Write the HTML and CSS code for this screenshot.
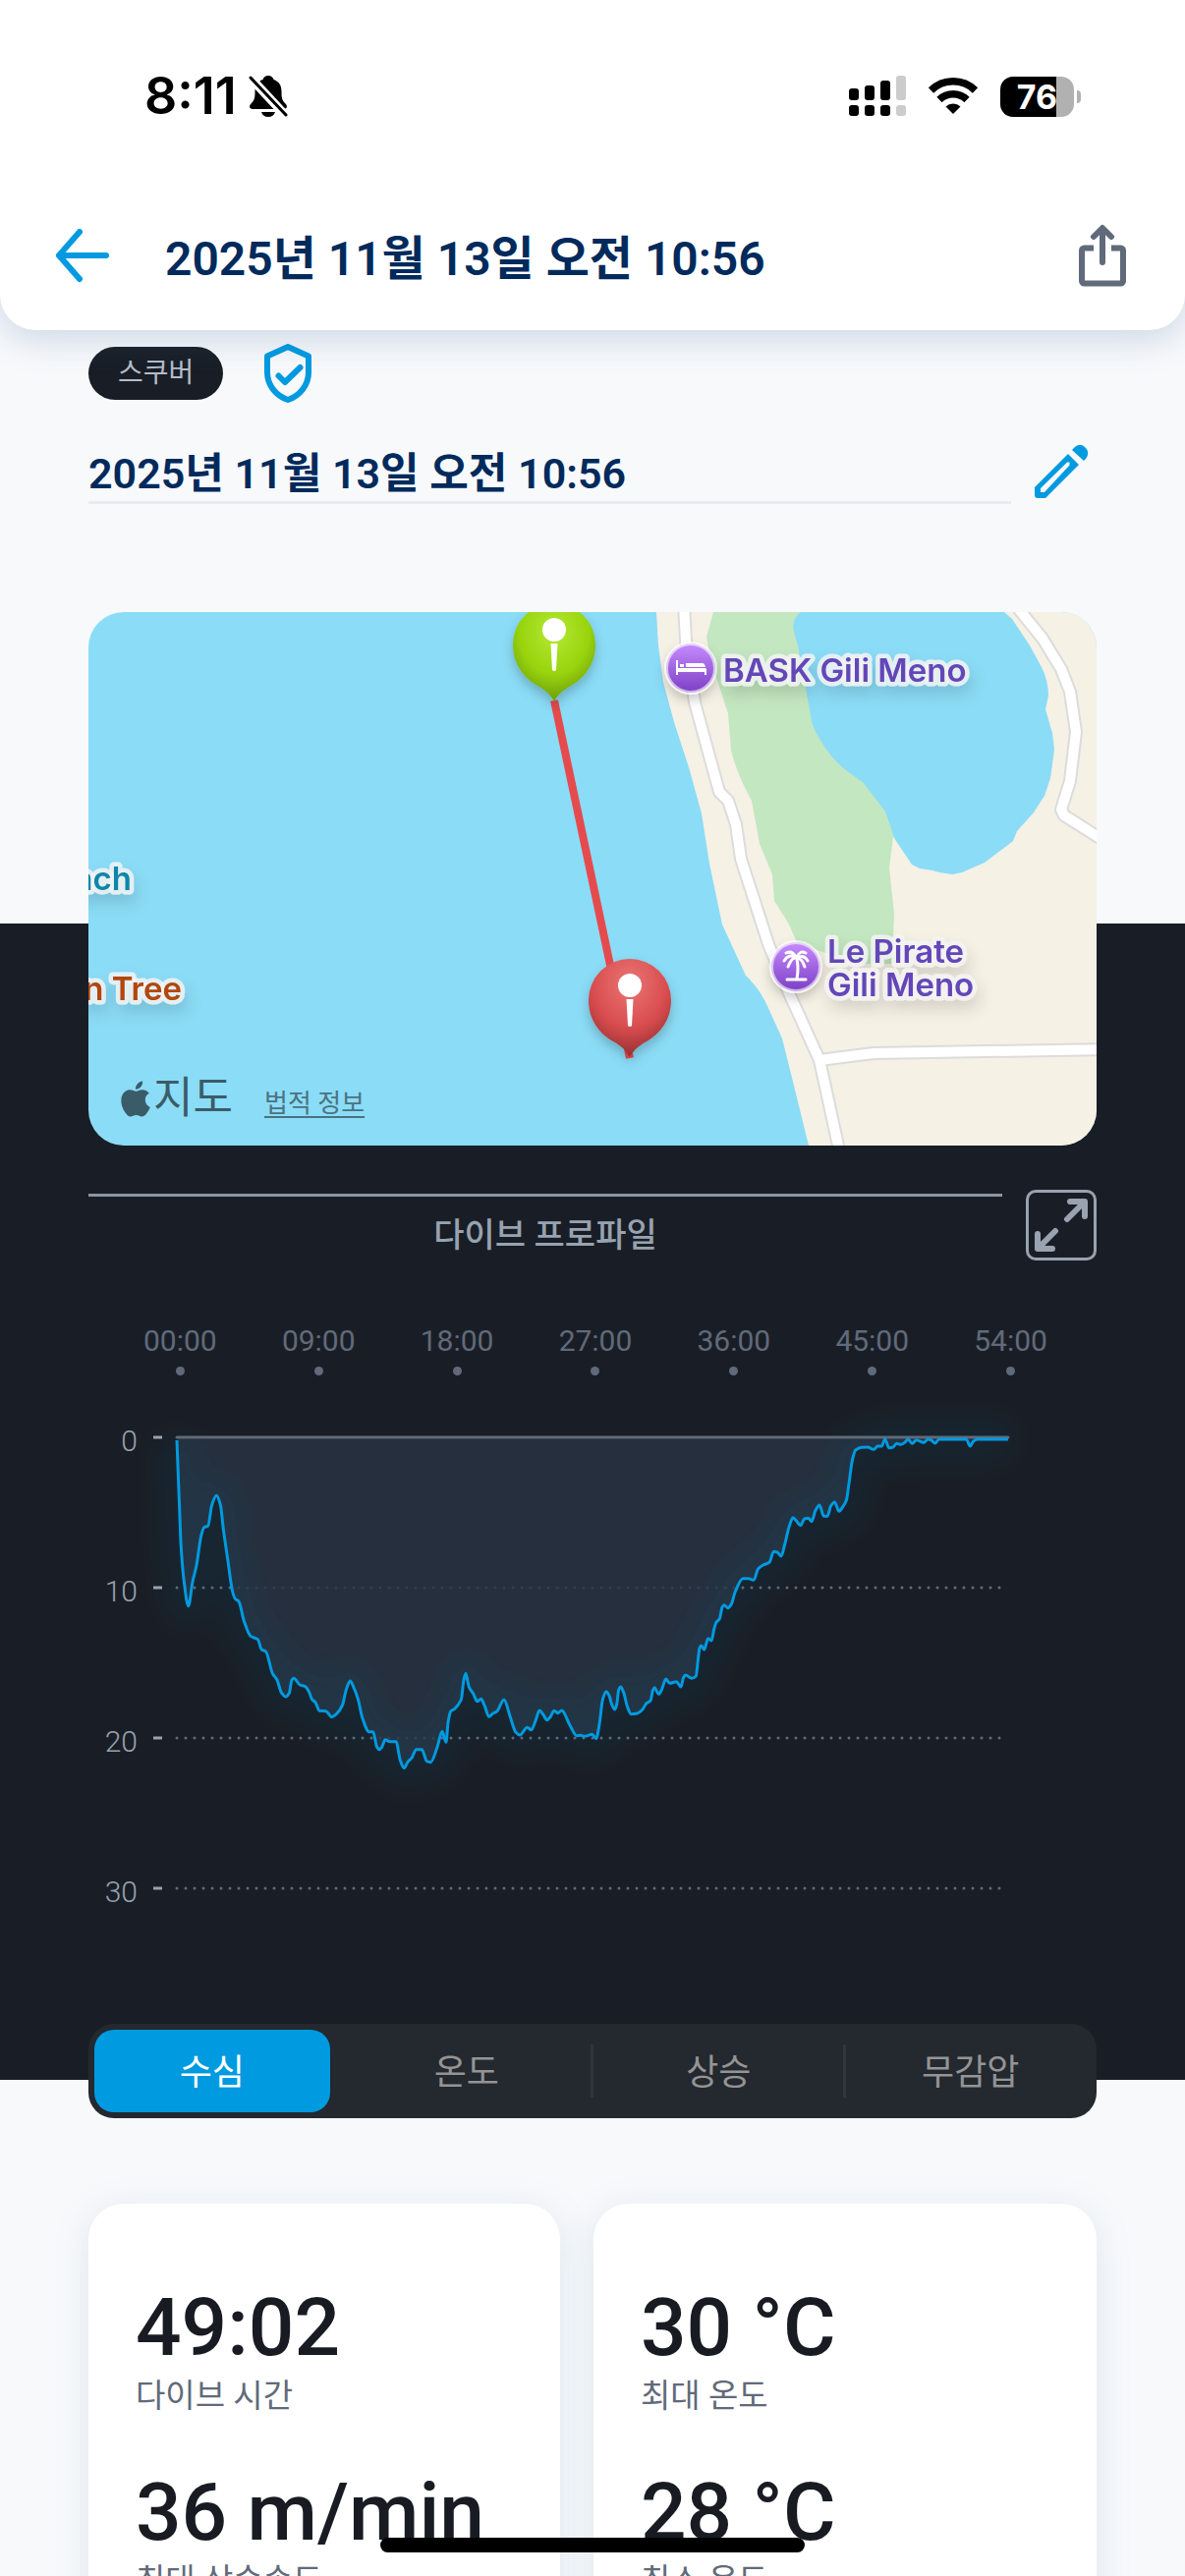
FILE: index.html
```html
<!DOCTYPE html>
<html lang="ko">
<head>
    <meta charset="UTF-8">
    <meta name="viewport" content="width=device-width, initial-scale=1.0">
    <title>다이브 로그</title>
    <link rel="stylesheet" href="styles.css">
</head>
<body>
    <header class="header">
        <div class="status-bar">
            <div class="status-left">
                <span class="clock">8:11</span>
                <svg class="bell" width="40" height="44" viewBox="0 0 40 44">
                    <path d="M20 1c-3 0-5 2-5.500 4C9 7 6.500 11 6.500 17c0 7-.5 9-4 12.500C0 32 1 35 4 35h32c3 0 4-3 1.500-5.500C34 26 33.500 24 33.500 17c0-6-2.500-10-8-12C25 3 23 1 20 1zM13 38h14c-1 3.500-3.500 5-7 5s-6-1.500-7-5z"/>
                    <path d="M-1 0l40 43" stroke="#fff" stroke-width="9"/>
                    <path d="M2 3l36 38" stroke="#000" stroke-width="3" stroke-linecap="round"/>
                </svg>
            </div>
            <div class="status-right">
                <svg width="58" height="42" viewBox="0 0 58 42">
                    <rect x="0" y="13" width="10" height="12" rx="3"/>
                    <rect x="16" y="10" width="10" height="15" rx="3"/>
                    <rect x="32" y="5" width="10" height="20" rx="3"/>
                    <rect x="48" y="0" width="10" height="25" rx="3" fill="#ccc"/>
                    <rect x="0" y="30" width="10" height="11" rx="3"/>
                    <rect x="16" y="30" width="10" height="11" rx="3"/>
                    <rect x="32" y="30" width="10" height="11" rx="3"/>
                    <rect x="48" y="30" width="10" height="11" rx="3" fill="#ccc"/>
                </svg>
                <svg width="52" height="38" viewBox="0 0 52 38">
                    <path d="M3.500 13a32 32 0 0 1 45 0" fill="none" stroke="#000" stroke-width="7.500"/>
                    <path d="M12 22.500a20 20 0 0 1 28 0" fill="none" stroke="#000" stroke-width="7.500"/>
                    <path d="M18.500 29.500a11 11 0 0 1 15 0L26 37z"/>
                </svg>
                <div class="battery"><span>76</span></div>
            </div>
        </div>
        <nav class="nav">
            <button class="icon-btn" aria-label="뒤로">
                <svg width="56" height="56" viewBox="0 0 56 56" fill="none" stroke="#009ae0" stroke-width="6" stroke-linecap="round" stroke-linejoin="round">
                    <path d="M25 4L4 28l21 24M4 28h48"/>
                </svg>
            </button>
            <h1>2025년 11월 13일 오전 10:56</h1>
            <button class="icon-btn" aria-label="공유">
                <svg width="48" height="64" viewBox="0 0 48 64" fill="none" stroke="#616a7a" stroke-width="6">
                    <path d="M15 24.500H5.500a2.500 2.500 0 0 0-2.500 2.500v31a2.500 2.500 0 0 0 2.500 2.500h37a2.500 2.500 0 0 0 2.500-2.500V27a2.500 2.500 0 0 0-2.500-2.500H33"/>
                    <path d="M24 39V5M15 13l9-9 9 9" stroke-linecap="round" stroke-linejoin="round"/>
                </svg>
            </button>
        </nav>
    </header>

    <main>
        <section class="summary">
            <div class="badges">
                <span class="pill">스쿠버</span>
                <svg width="48" height="60" viewBox="0 0 48 60" fill="none" stroke="#009ae0" stroke-width="6" stroke-linejoin="round">
                    <path d="M24 3L3 12.500V29c0 13 9 24 21 28 12-4 21-15 21-28V12.500z"/>
                    <path d="M14.500 32.500l6.500 6.500L36.500 24" stroke-linecap="round"/>
                </svg>
            </div>
            <div class="title-row">
                <h2>2025년 11월 13일 오전 10:56</h2>
                <button class="icon-btn" aria-label="편집">
                    <svg width="54" height="54" viewBox="0 0 54 54">
                        <path d="M0 43v8a3 3 0 0 0 3 3h8L45 20 34 9zM6 48v-4L33 17.500h2.500v3L10 48z" fill="#009ae0" fill-rule="evenodd"/>
                        <path d="M38 5l2-2c4-4 8-4 11-1 4 3.500 4 8 1 12l-2 2z" fill="#009ae0"/>
                    </svg>
                </button>
            </div>
        </section>

        <section class="map">
            <svg class="map-canvas" viewBox="0 0 1026 543" preserveAspectRatio="xMidYMid slice">
                <defs>
                    <radialGradient id="green" cx=".5" cy=".3" r=".7">
                        <stop offset="0" stop-color="#b5e836"/>
                        <stop offset=".6" stop-color="#98d40c"/>
                        <stop offset="1" stop-color="#6f9c06"/>
                    </radialGradient>
                    <radialGradient id="red" cx=".5" cy=".25" r=".75">
                        <stop offset="0" stop-color="#ea7575"/>
                        <stop offset=".6" stop-color="#d94d4f"/>
                        <stop offset="1" stop-color="#952f31"/>
                    </radialGradient>
                    <linearGradient id="purple" x1="0" y1="0" x2="0" y2="1">
                        <stop offset="0" stop-color="#c78bff"/>
                        <stop offset="1" stop-color="#7c3fc4"/>
                    </linearGradient>
                    <filter id="soft" x="-30%" y="-30%" width="160%" height="180%">
                        <feDropShadow dx="0" dy="6" stdDeviation="6" flood-color="#000" flood-opacity=".22"/>
                    </filter>
                    <filter id="label-soft" x="-10%" y="-10%" width="120%" height="130%">
                        <feDropShadow dx="3" dy="9" stdDeviation="8" flood-color="#000" flood-opacity=".14"/>
                    </filter>
                    <path id="pin" d="M0-42a42 42 0 0 0-42 42c0 20 11 34 25 42 9 5 13 9 17 16 4-7 8-11 17-16 14-8 25-22 25-42A42 42 0 0 0 0-42z"/>
                    <g id="pin-mark" fill="#fff">
                        <circle cy="-15" r="12"/>
                        <path d="M-3.500-1h7L2 26q-2 2-4 0z"/>
                    </g>
                </defs>
                <rect width="1026" height="543" fill="#8bdcf7"/>
                <path fill="#f5f1e5" d="M578 0L580 34 585 71 596 112 611 158 624 205 632 256 645 318 669 370Q683 383 691 401L706 434 716 474 733 543H1026V0z"/>
                <path fill="#c3e7c0" d="M636 0L629 25 634 52 651 103 654 141Q660 165 675 192L683 236 696 267 698 294 712 316 722 338 786 358H818L820 307 815 260 819 229 900 150 800 0z"/>
                <path fill="#8bdcf7" d="M725 0Q715 7 718 20L722 34 736 111Q738 120 746 132 755 148 771 161L789 174 811 203 817 220 820 230 838 257 846 261 859 263 866 265 879 267 889 265 912 255 941 233 945 223 962 204 973 187 979 169 983 140 981 123 974 99 977 85Q977 70 970 56L958 34 940 7 932 0z"/>
                <g fill="none" stroke-linejoin="round">
                    <g stroke="#dcdcdc" stroke-width="14">
                        <path d="M606-9L608 29 617 92 642 183 651 192 659 216 664 251 692 338 714 390 744 456 765 552"/>
                        <path d="M744 456L799 449 1040 445"/>
                        <path d="M942-9L971 27 990 58 999 81 1005 122 999 172 990 201 993 207 1034 233"/>
                    </g>
                    <g stroke="#fff" stroke-width="10">
                        <path d="M606-9L608 29 617 92 642 183 651 192 659 216 664 251 692 338 714 390 744 456 765 552"/>
                        <path d="M744 456L799 449 1040 445"/>
                        <path d="M942-9L971 27 990 58 999 81 1005 122 999 172 990 201 993 207 1034 233"/>
                    </g>
                </g>

                <!-- dive track -->
                <path d="M474 90L551 454" stroke="#e54b4d" stroke-width="8"/>
                <g transform="translate(474 33)">
                    <use href="#pin" fill="url(#green)" filter="url(#soft)"/>
                    <use href="#pin-mark"/>
                </g>
                <g transform="translate(551 395)">
                    <use href="#pin" fill="url(#red)" filter="url(#soft)"/>
                    <use href="#pin-mark"/>
                </g>

                <!-- places -->
                <g filter="url(#soft)">
                    <circle cx="613" cy="57" r="25" fill="url(#purple)" stroke="#fff" stroke-opacity=".6" stroke-width="4"/>
                    <circle cx="720" cy="361" r="25" fill="url(#purple)" stroke="#fff" stroke-opacity=".6" stroke-width="4"/>
                </g>
                <path fill="#fff" d="M598 49h2v8h28q1 0 1 2v5h-2v-3h-27v3h-2zM602 53h4v3h-4zM608 52h17q2 0 3 4h-20z"/>
                <g fill="none" stroke="#fff" stroke-width="3" stroke-linecap="round">
                    <path d="M721 353q2 10 0 20M711 374h19M720 352q-7-5-12 3M720 352q-4-1-8 9M720 351q-4-7-10-4M721 351q3-7 9-4M721 352q7-4 11 3M721 352q5 0 8 9"/>
                </g>
                <g class="map-label" filter="url(#label-soft)">
                    <text x="646" y="71" fill="#6446b8">BASK Gili Meno</text>
                    <text x="752" y="357" fill="#6446b8">Le Pirate</text>
                    <text x="752" y="391" fill="#6446b8">Gili Meno</text>
                    <text x="44" y="283" text-anchor="end" fill="#0f86ab">ach</text>
                    <text x="95" y="395" text-anchor="end" fill="#b2470f">n Tree</text>
                </g>
            </svg>
            <div class="map-legal">
                <svg width="36" height="37" viewBox="0 0 24 24"><path d="M12.152 6.896c-.948 0-2.415-1.078-3.960-1.040-2.040.027-3.910 1.183-4.961 3.014-2.117 3.675-.546 9.103 1.519 12.090 1.013 1.454 2.208 3.090 3.792 3.039 1.520-.065 2.090-.987 3.935-.987 1.831 0 2.350.987 3.960.948 1.637-.026 2.676-1.480 3.676-2.948 1.156-1.688 1.636-3.325 1.662-3.415-.039-.013-3.182-1.221-3.220-4.857-.026-3.040 2.480-4.494 2.597-4.559-1.429-2.090-3.623-2.324-4.390-2.376-2-.156-3.675 1.090-4.610 1.090zM15.530 3.830c.843-1.012 1.400-2.427 1.245-3.830-1.207.052-2.662.805-3.532 1.818-.780.896-1.454 2.338-1.273 3.714 1.338.104 2.715-.688 3.559-1.701"/></svg>
                <span>지도</span>
                <a href="#">법적 정보</a>
            </div>
        </section>

        <section class="profile">
            <div class="profile-head">
                <h3>다이브 프로파일</h3>
                <button class="expand" aria-label="전체 화면">
                    <svg width="54" height="56" viewBox="0 0 54 56" fill="none" stroke="#98a2b0" stroke-width="6" stroke-linecap="round" stroke-linejoin="round">
                        <path d="M33 22L50 5M36 4h15v15M21 34L4 51M18 52H3V37"/>
                    </svg>
                </button>
            </div>
            <div class="time-axis">
                <span>00:00</span><span>09:00</span><span>18:00</span><span>27:00</span><span>36:00</span><span>45:00</span><span>54:00</span>
            </div>
            <svg class="chart" viewBox="0 0 1026 500">
                <defs>
                    <filter id="glow" filterUnits="userSpaceOnUse" x="0" y="-60" width="1026" height="560">
                        <feGaussianBlur stdDeviation="14"/>
                    </filter>
                </defs>
                <g class="grid">
                    <path d="M90 176H932M90 329H932M90 482H932"/>
                </g>
                <path id="area" fill="#283343" fill-opacity=".8"/>
                <path id="glow-line" fill="none" stroke="#0a6f9c" stroke-opacity=".09" stroke-width="36" filter="url(#glow)"/>
                <path d="M90 23H936" stroke="#616a7a" stroke-width="3" stroke-linecap="round"/>
                <path id="line" fill="none" stroke="#009ae0" stroke-width="3" stroke-linejoin="round"/>
                <path d="M66 23h9M66 176h9M66 329h9M66 482h9" stroke="#98a2b0" stroke-width="3"/>
                <g class="depth-label" text-anchor="end">
                    <text x="50" y="37">0</text>
                    <text x="50" y="190">10</text>
                    <text x="50" y="343">20</text>
                    <text x="50" y="496">30</text>
                </g>
            </svg>
            <div class="tabs">
                <button class="tab active">수심</button>
                <button class="tab">온도</button>
                <button class="tab">상승</button>
                <button class="tab">무감압</button>
            </div>
        </section>

        <section class="stats">
            <dl class="card">
                <div><dd>49:02</dd><dt>다이브 시간</dt></div>
                <div><dd>36 m/min</dd><dt>최대 상승속도</dt></div>
            </dl>
            <dl class="card">
                <div><dd>30 °C</dd><dt>최대 온도</dt></div>
                <div><dd>28 °C</dd><dt>최소 온도</dt></div>
            </dl>
        </section>
    </main>
    <div class="home-indicator"></div>

    <script>
        // depth samples, three units per chart pixel
        const descent = '240,108 252,420 262,540 275,614 288,540 300,490 314,400 323,374 335,370 347,305 361,277 373,305 382,380 395,470 410,570 418,592 429,600 445,660 465,706 487,716 499,748 511,752 532,820 545,838 560,880 573,891 583,880 591,840 597,835 616,855 632,860 643,875 653,900 663,908 675,934 695,935 713,953 727,944 745,918 757,870 769,843 781,865 793,898 807,958 827,998 839,998 851,1045 858,1052 866,1045 876,1022 890,1028 909,1028 922,1085 934,1109 945,1090 957,1078 971,1052 988,1052 1003,1088 1015,1091 1035,1045 1050,997 1062,1030 1068,970 1076,936 1088,928 1108,900 1116,840 1122,820 1132,862 1145,882 1157,905 1169,898 1180,920 1193,952 1205,942 1217,936 1239,900 1257,950 1275,1000 1287,1008 1310,985 1322,992 1335,965 1347,933 1358,945 1370,962 1380,953 1392,934 1404,941 1415,933 1440,978 1461,1010 1473,1009 1485,1012 1508,1006 1520,1019 1530,975 1540,900';
        const ascent = '171,875 180,888 188,915 197,930 203,915 209,870 215,861 224,878 235,920 247,944 262,943 280,932 294,911 306,903 313,872 318,863 331,883 340,870 353,837 365,850 385,845 399,861 407,832 413,825 432,835 445,828 451,780 456,742 461,735 470,747 482,713 492,720 500,685 506,665 517,653 525,618 531,611 542,620 552,610 565,570 588,530 605,530 621,535 635,500 650,489 669,481 682,448 693,450 705,462 715,430 730,370 741,344 752,355 764,368 776,348 788,346 798,356 810,322 822,306 835,340 846,340 857,308 868,297 882,325 892,313 904,292 912,240 922,170 932,138 950,130 970,129 987,136 1000,126 1012,126 1022,104 1034,131 1045,130 1058,118 1070,121 1082,115 1093,105 1105,118 1118,107 1140,115 1153,105 1164,108 1175,117 1187,105 1270,105 1282,126 1292,111 1303,105 1398,105';

        const parse = (text, offset) => text.split(' ').map(pair => {
            const [x, y] = pair.split(',').map(Number);
            return [(x + offset) / 3 + 10, y / 3 - 10];
        });
        const points = [...parse(descent, 0), ...parse(ascent, 1380)];

        // monotone slopes keep the curve from overshooting the samples
        const slope = i => {
            if (i === 0 || i === points.length - 1) return 0;
            const [a, b, c] = [points[i - 1], points[i], points[i + 1]];
            const left = (b[1] - a[1]) / (b[0] - a[0]);
            const right = (c[1] - b[1]) / (c[0] - b[0]);
            return left * right <= 0 ? 0 : 2 * left * right / (left + right);
        };

        let d = `M${points[0]}L${points[1]}`;
        for (let i = 2; i < points.length; i++) {
            const [x0, y0] = points[i - 1];
            const [x1, y1] = points[i];
            const h = (x1 - x0) / 3;
            d += `C${x0 + h},${y0 + h * slope(i - 1)} ${x1 - h},${y1 - h * slope(i)} ${x1},${y1}`;
        }
        document.getElementById('line').setAttribute('d', d);
        document.getElementById('glow-line').setAttribute('d', d);
        document.getElementById('area').setAttribute('d', d + 'V25H90z');
    </script>
</body>
</html>
```
FILE: styles.css
```css
* { box-sizing: border-box; margin: 0; padding: 0; }
body {
    height: 100vh;
    overflow: hidden;
    background: #f8f9fb;
    color: #181c22;
    font-family: Roboto, "Noto Sans CJK KR", sans-serif;
}
button { font: inherit; background: none; border: none; cursor: pointer; }
svg { display: block; flex: none; }

/* header */
.header {
    position: relative;
    z-index: 2;
    background: #fff;
    border-radius: 0 0 36px 36px;
    padding-bottom: 12px;
    box-shadow: 0 8px 36px rgba(60, 110, 160, 0.25);
}
.status-bar {
    height: 196px;
    padding: 0 106px 0 147px;
    display: flex;
    justify-content: space-between;
    align-items: center;
    font-family: Inter, sans-serif;
}
.status-left { display: flex; align-items: center; gap: 12px; color: #000; }
.clock { font-size: 52px; font-weight: 600; line-height: 60px; }
.status-right { display: flex; align-items: center; gap: 22px; }
.battery {
    position: relative;
    width: 75px;
    height: 41px;
    margin-right: 7px;
    border-radius: 13px;
    background: linear-gradient(90deg, #000 57px, #b1b1b1 57px);
    color: #fff;
    font-size: 34px;
    font-weight: 700;
    line-height: 41px;
    text-align: center;
}
.battery::after {
    content: "";
    position: absolute;
    right: -7px;
    top: 14px;
    width: 4px;
    height: 13px;
    border-radius: 0 4px 4px 0;
    background: #b1b1b1;
}
.nav {
    height: 128px;
    padding: 0 60px 0 56px;
    display: flex;
    align-items: center;
}
.nav h1 {
    flex: 1;
    margin-left: 56px;
    padding-top: 8px;
    font-size: 48px;
    font-weight: 600;
    line-height: 64px;
    color: #002a5c;
}

/* summary */
.summary { padding: 14px 90px 0; }
.badges { display: flex; align-items: center; gap: 42px; }
.pill {
    padding: 0 30px;
    border-radius: 27px;
    background: #191e26;
    color: #b4bdca;
    font-size: 28px;
    line-height: 54px;
}
.title-row { display: flex; align-items: center; gap: 24px; margin-top: 36px; padding-right: 9px; }
.title-row h2 {
    flex: 1;
    border-bottom: 3px solid #e9ecee;
    padding-top: 8px;
    font-size: 43px;
    font-weight: 600;
    line-height: 56px;
    color: #002a5c;
}

/* map */
.map {
    position: relative;
    z-index: 1;
    margin: 110px 90px 0;
    border-radius: 36px;
    overflow: hidden;
}
.map-canvas { width: 100%; height: 543px; }
.map-label {
    font: 600 33px Inter, sans-serif;
    stroke: #f3f3f3;
    stroke-opacity: 0.85;
    stroke-width: 9px;
    stroke-linejoin: round;
    paint-order: stroke;
}
.map-legal {
    position: absolute;
    left: 30px;
    bottom: 20px;
    display: flex;
    align-items: center;
    color: #3a5c68;
    fill: #3a5c68;
}
.map-legal span { font-size: 44px; line-height: 56px; }
.map-legal a { margin-left: 32px; padding-top: 4px; font-size: 26px; color: #4b7280; text-underline-offset: 4px; }

/* dive profile */
.profile {
    display: flex;
    flex-direction: column;
    margin-top: -226px;
    padding: 271px 90px 0;
    background: #191e26;
}
.profile-head { display: flex; gap: 24px; }
.profile-head h3 {
    flex: 1;
    margin-top: 4px;
    border-top: 3px solid #8b95a3;
    padding-top: 14px;
    color: #98a2b0;
    font-size: 34px;
    font-weight: 500;
    line-height: 50px;
    text-align: center;
}
.expand {
    display: grid;
    place-items: center;
    width: 72px;
    height: 72px;
    border: 3px solid #98a2b0;
    border-radius: 10px;
}
.time-axis {
    display: flex;
    justify-content: space-between;
    margin-top: 64px;
    padding: 0 50px 0 56px;
    color: #616a7a;
    font-size: 30px;
    font-weight: 400;
    line-height: 36px;
}
.time-axis span::after {
    content: "";
    display: block;
    width: 9px;
    height: 9px;
    margin: 8px auto 0;
    border-radius: 50%;
    background: #616a7a;
}
.chart { width: 100%; margin-top: 40px; overflow: visible; }
.grid path { stroke: #616a7a; stroke-width: 3px; stroke-linecap: round; stroke-dasharray: 0 9; }
.depth-label { fill: #98a2b0; font-size: 30px; font-weight: 300; }

.tabs {
    position: relative;
    z-index: 1;
    display: grid;
    grid-template-columns: repeat(4, 1fr);
    height: 96px;
    margin: 120px 0 -39px;
    padding: 6px 0;
    border-radius: 26px;
    background: #24282f;
}
.tab { position: relative; padding-bottom: 5px; color: #949494; font-size: 36px; }
.tab.active { margin: 0 11px 0 6px; border-radius: 20px; background: #009ae0; color: #fff; }
.tab + .tab + .tab::before {
    content: "";
    position: absolute;
    left: -2px;
    top: 15px;
    width: 3px;
    height: 54px;
    background: #30353e;
}

/* stats */
.stats { display: grid; grid-template-columns: 480fr 512fr; gap: 34px; margin: 126px 90px 0; }
.card {
    display: grid;
    gap: 48px;
    padding: 78px 48px 60px;
    border-radius: 36px;
    background: #fff;
    box-shadow: 0 6px 36px rgba(90, 140, 180, 0.16);
    white-space: nowrap;
}
.card div { display: flex; flex-direction: column; }
.card dd { font-size: 82px; font-weight: 500; line-height: 96px; }
.card dt { color: #616a7a; font-size: 33px; line-height: 44px; }

.home-indicator {
    position: fixed;
    left: 50%;
    bottom: 24px;
    z-index: 3;
    width: 432px;
    height: 15px;
    margin-left: -216px;
    border-radius: 8px;
    background: #000;
}
```
